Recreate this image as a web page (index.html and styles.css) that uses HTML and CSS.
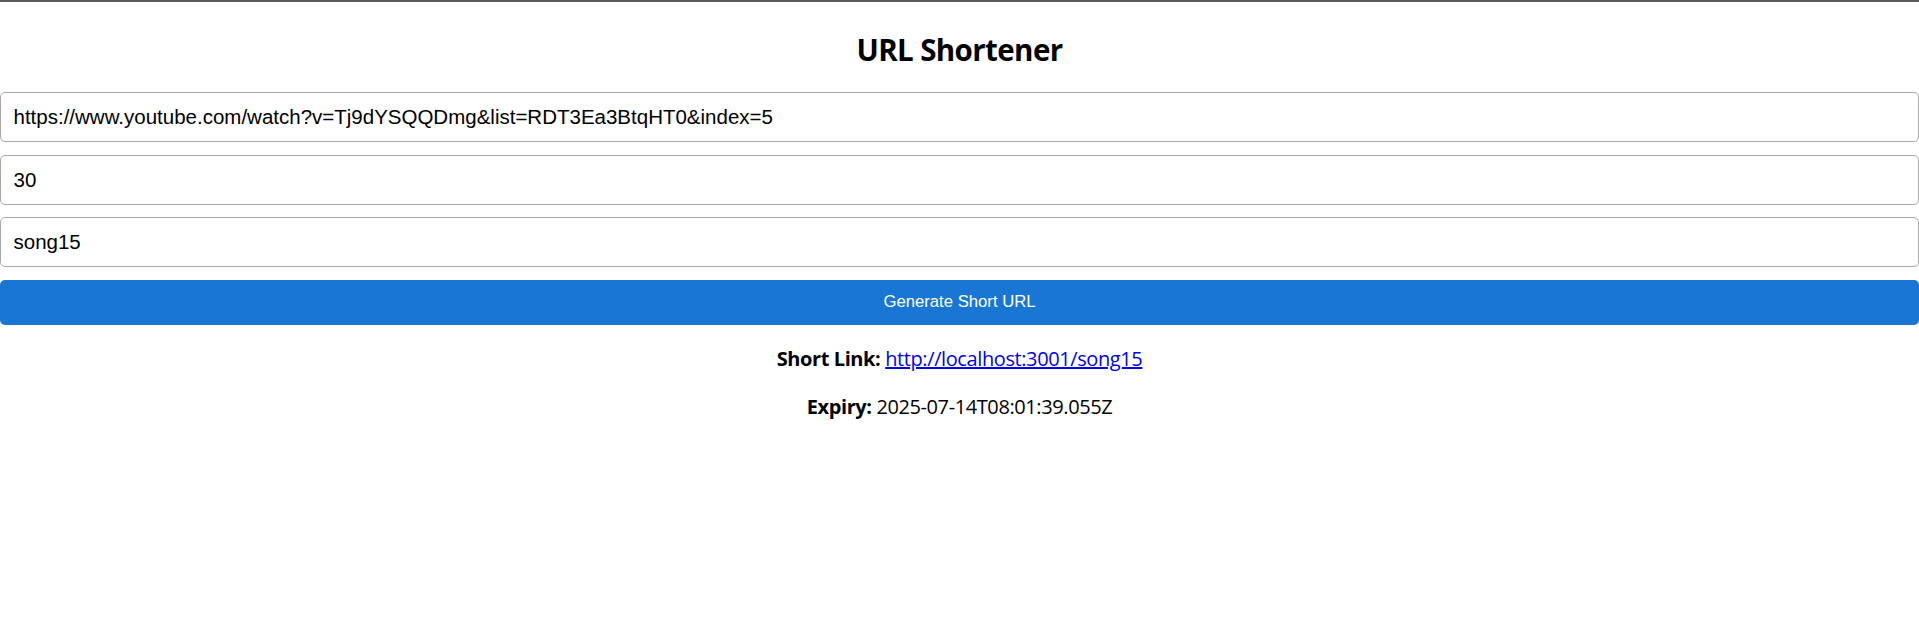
FILE: index.html
```html
<!DOCTYPE html>
<html lang="en">
<head>
<meta charset="utf-8">
<title>URL Shortener</title>
<link rel="stylesheet" href="styles.css">
</head>
<body>
<div class="app">
  <h2 class="title">URL Shortener</h2>
  <form class="form">
    <input class="field" type="text" value="https://www.youtube.com/watch?v=Tj9dYSQQDmg&amp;list=RDT3Ea3BtqHT0&amp;index=5">
    <input class="field" type="text" value="30">
    <input class="field" type="text" value="song15">
    <button class="submit" type="button">Generate Short URL</button>
  </form>
  <div class="result">
    <p class="line"><strong>Short Link:</strong> <a class="link" href="#">http://localhost:3001/song15</a></p>
    <p class="line"><strong>Expiry:</strong> 2025-07-14T08:01:39.055Z</p>
  </div>
</div>
</body>
</html>
```

FILE: styles.css
```css
html, body {
  margin: 0;
  padding: 0;
  background: #ffffff;
}
body {
  border-top: 2px solid #5a5a5a;
  font-family: "Open Sans", "Noto Sans", sans-serif;
  color: #000;
}
.app {
  display: flex;
  flex-direction: column;
}
.title {
  margin: 27.5px 0 22.5px;
  font-size: 29.5px;
  line-height: 40px;
  font-weight: 700;
  letter-spacing: -0.6px;
  text-align: center;
}
.form {
  display: flex;
  flex-direction: column;
  gap: 12.5px;
}
.field {
  box-sizing: border-box;
  width: 100%;
  height: 50px;
  margin: 0;
  padding: 0 12.5px;
  border: 1px solid #a9a9a9;
  border-radius: 5px;
  font-family: "Liberation Sans", Arial, sans-serif;
  font-size: 20.5px;
  color: #000;
  background: #fff;
  outline: none;
}
.submit {
  box-sizing: border-box;
  width: 100%;
  height: 45px;
  margin: 0;
  border: none;
  border-radius: 5px;
  background: #1976d2;
  color: #fff;
  font-family: "Liberation Sans", Arial, sans-serif;
  font-size: 16.7px;
  cursor: pointer;
}
.result {
  text-align: center;
  padding-top: 20px;
}
.line {
  margin: 0 0 20px;
  font-size: 20px;
  line-height: 28px;
  letter-spacing: -0.4px;
}
.link {
  color: #0000ee;
  text-decoration: underline;
}
```
